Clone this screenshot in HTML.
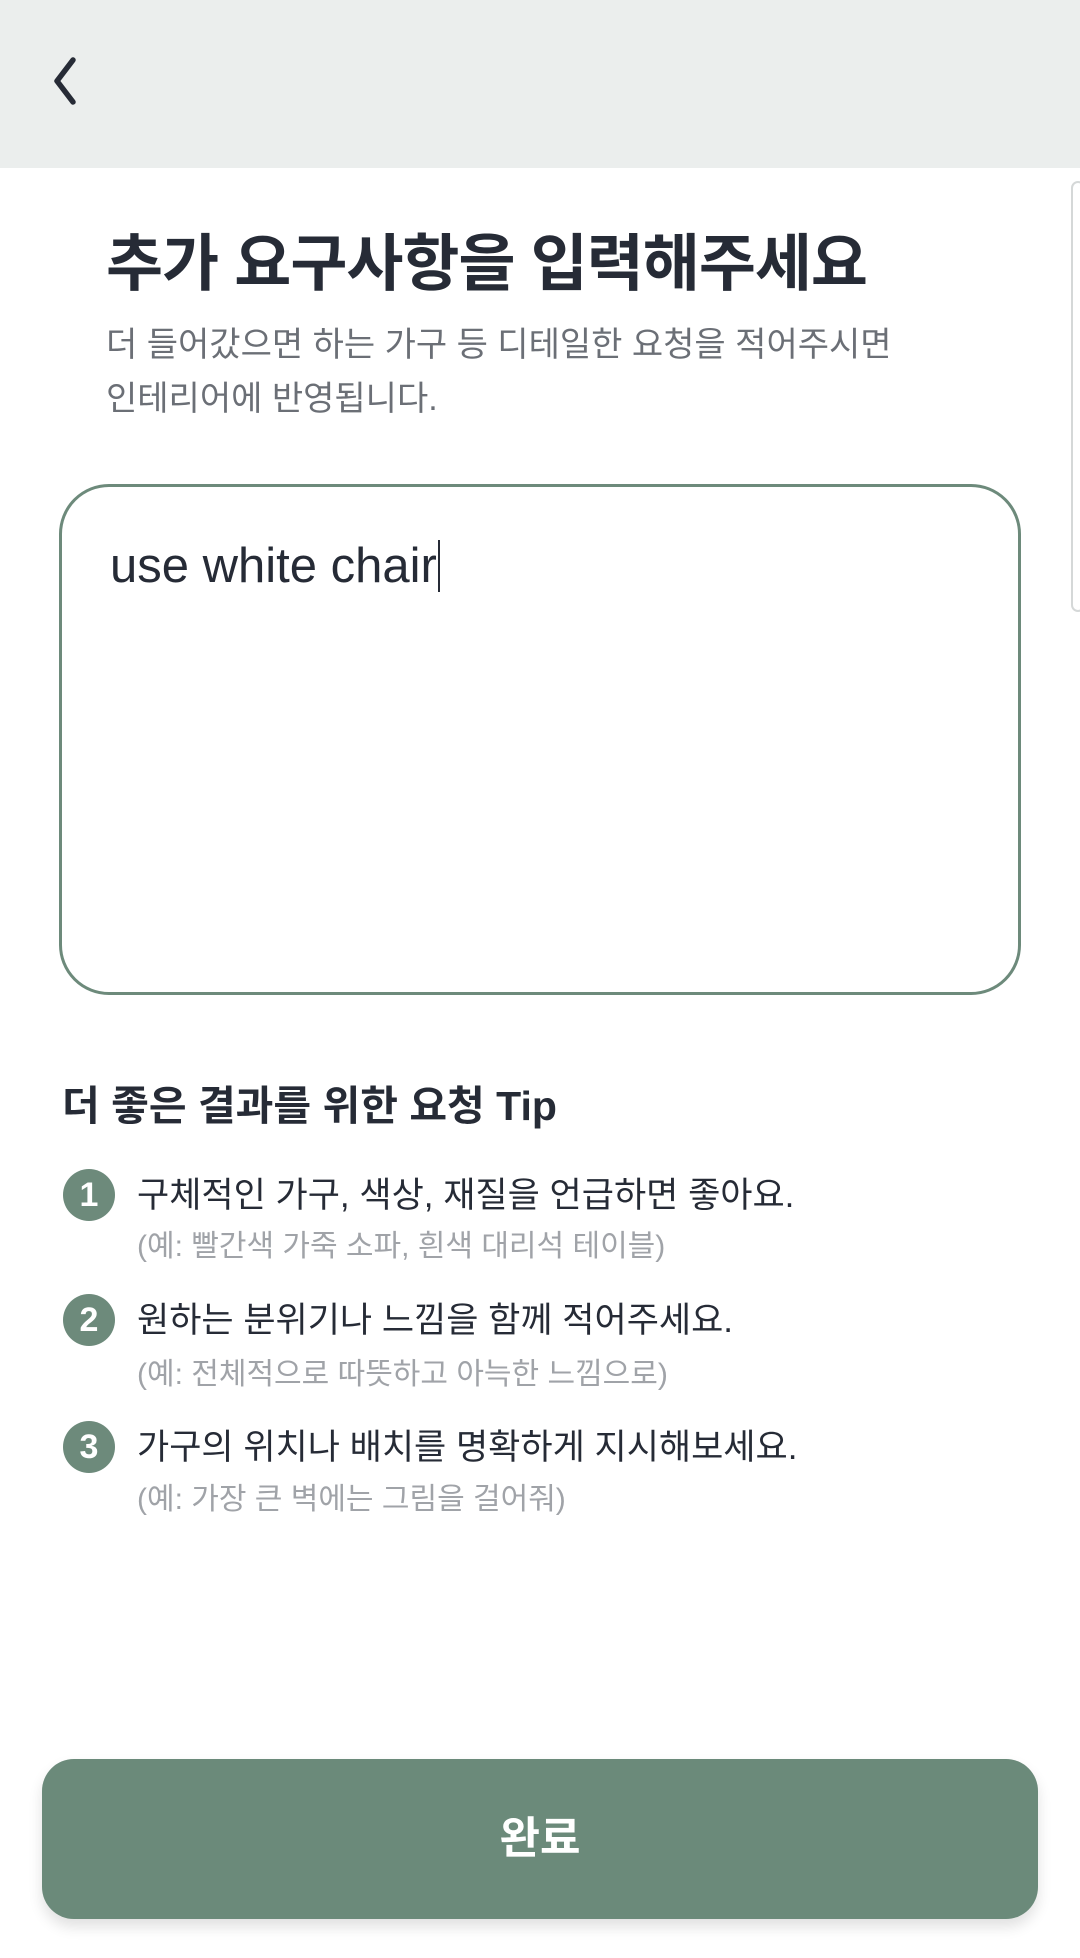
<!DOCTYPE html>
<html><head><meta charset="utf-8"><style>
*{margin:0;padding:0;box-sizing:border-box}
body{width:1080px;height:1958px;background:#fff;position:relative;overflow:hidden;font-family:"Liberation Sans","Noto Sans CJK KR",sans-serif;color:#262b36}
.hdr{position:absolute;left:0;top:0;width:1080px;height:168px;background:#ebeeed}
.abs{position:absolute;white-space:nowrap}
.title{left:106px;top:227px;font-size:62px;font-weight:700;letter-spacing:-1px;line-height:76px}
.sub{left:106px;top:318px;font-size:34px;line-height:54px;color:#6b6f76;white-space:normal;width:960px}
.box{position:absolute;left:59px;top:484px;width:962px;height:511px;border:3px solid #6d8a7b;border-radius:50px}
.txt{left:110px;top:535px;font-size:49px;line-height:62px;color:#262b36}
.cur{display:inline-block;width:2px;height:52px;background:#262b36;vertical-align:-10px;margin-left:1px}
.tiph{left:62px;top:1080px;font-size:41px;font-weight:700;line-height:52px}
.num{position:absolute;left:63px;width:52px;height:52px;border-radius:50%;background:#6d8a7b;color:#fff;font-weight:700;font-size:34px;text-align:center;line-height:52px}
.m{left:137px;font-size:35px;line-height:44px;color:#262b36}
.s{left:137px;font-size:30px;line-height:36px;color:#a0a3a8}
.btn{position:absolute;left:42px;top:1759px;width:996px;height:160px;border-radius:32px;background:#6b8a7a;box-shadow:0 8px 14px rgba(0,0,0,0.12);color:#fff;font-size:44px;font-weight:700;text-align:center;line-height:160px}
.sb{position:absolute;left:1071px;top:181px;width:14px;height:431px;border:2px solid #d5d8d8;border-radius:8px}
</style></head><body>
<div class="hdr"></div>
<svg class="abs" style="left:46px;top:56px" width="36" height="50" viewBox="0 0 36 50"><path d="M27 4 L11 25 L27 46" fill="none" stroke="#262b36" stroke-width="5.5" stroke-linecap="round" stroke-linejoin="round"/></svg>
<div class="sb"></div>
<div class="abs title">추가 요구사항을 입력해주세요</div>
<div class="abs sub">더 들어갔으면 하는 가구 등 디테일한 요청을 적어주시면<br>인테리어에 반영됩니다.</div>
<div class="box"></div>
<div class="abs txt">use white chair<span class="cur"></span></div>
<div class="abs tiph">더 좋은 결과를 위한 요청 Tip</div>
<div class="num" style="top:1169px">1</div>
<div class="abs m" style="top:1174px">구체적인 가구, 색상, 재질을 언급하면 좋아요.</div>
<div class="abs s" style="top:1229px">(예: 빨간색 가죽 소파, 흰색 대리석 테이블)</div>
<div class="num" style="top:1294px">2</div>
<div class="abs m" style="top:1299px">원하는 분위기나 느낌을 함께 적어주세요.</div>
<div class="abs s" style="top:1357px">(예: 전체적으로 따뜻하고 아늑한 느낌으로)</div>
<div class="num" style="top:1421px">3</div>
<div class="abs m" style="top:1426px">가구의 위치나 배치를 명확하게 지시해보세요.</div>
<div class="abs s" style="top:1482px">(예: 가장 큰 벽에는 그림을 걸어줘)</div>
<div class="btn">완료</div>
</body></html>
